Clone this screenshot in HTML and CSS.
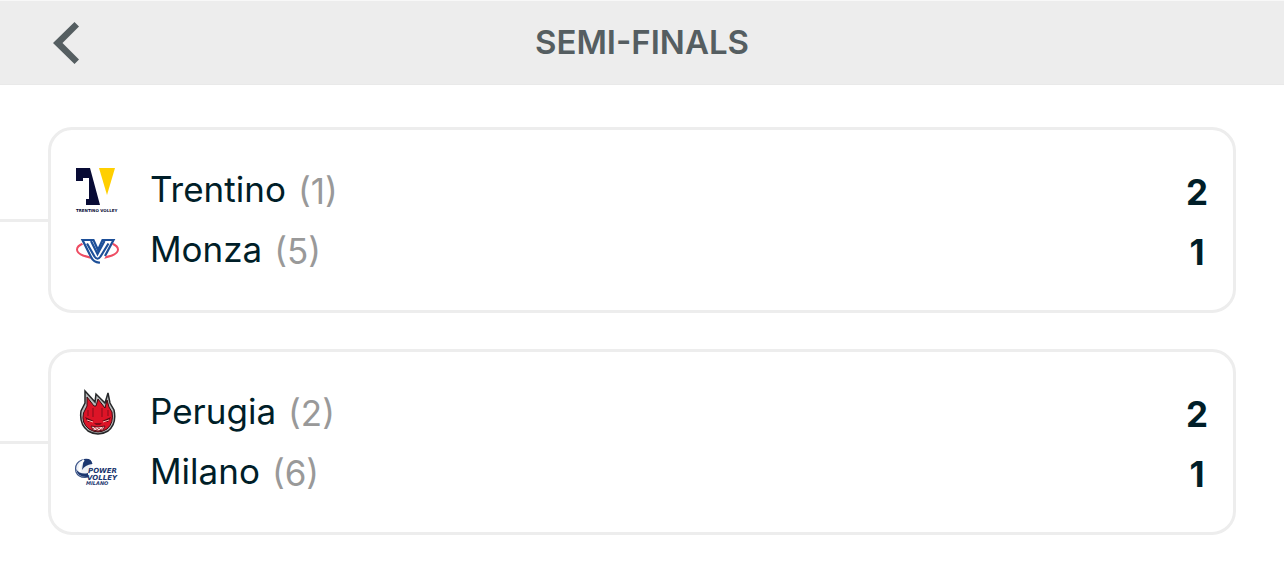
FILE: index.html
```
<!DOCTYPE html>
<html lang="en">
<head>
    <meta charset="utf-8">
    <meta name="viewport" content="width=device-width, initial-scale=1">
    <title>Semi-finals</title>
    <link rel="stylesheet" href="styles.css">
</head>
<body>
    <header class="topbar">
        <button class="back" type="button" aria-label="Back">
            <svg width="26" height="42" viewBox="0 0 26 42"><path d="M21.5 0 L26 4.5 L9.5 21 L26 37.5 L21.5 42 L0 21 Z" fill="#555e61"/></svg>
        </button>
        <h1 class="title">SEMI-FINALS</h1>
    </header>

    <main class="bracket">
        <section class="match">
            <div class="connector"></div>
            <div class="card">
                <div class="team">
                    <svg class="logo" viewBox="0 0 46 46">
                        <path d="M2 1 H16 L26 38 H12 V32 H15 V11 H9 V14 H2 Z" fill="#080b35"/>
                        <path d="M25 1 H41 L33 28 Z" fill="#ffcf00"/>
                        <text class="logo-text" x="2" y="45" font-size="4" fill="#080b35">TRENTINO VOLLEY</text>
                    </svg>
                    <span class="name">Trentino</span>
                    <span class="seed">(1)</span>
                    <span class="score">2</span>
                </div>
                <div class="team">
                    <svg class="logo" viewBox="0 0 46 46" fill="none">
                        <ellipse cx="23.5" cy="22.5" rx="20.5" ry="8.5" stroke="#ee4d63" stroke-width="2"/>
                        <path d="M5 11 H42 L29 34 Q24 38 18 33 Z" fill="#fff"/>
                        <g stroke="#1d4f98" stroke-width="2.2">
                            <path d="M26 35.5 Q20 36 17 30 L8.5 13 H19.5 L24 23 L28.5 13 H39.5 L31 29"/>
                            <path d="M13 16.5 L20.5 29.500 Q23.500 34 26.500 29.500 L34.500 16.500"/>
                            <path d="M17 14 L23.500 27 L30.500 14"/>
                        </g>
                    </svg>
                    <span class="name">Monza</span>
                    <span class="seed">(5)</span>
                    <span class="score">1</span>
                </div>
            </div>
        </section>

        <section class="match">
            <div class="connector"></div>
            <div class="card">
                <div class="team">
                    <svg class="logo" viewBox="0 0 46 46">
                        <path d="M11 2 L21 13 L22 5 L31 14 L34 4 L36 14 L40 21 Q43 35 34 42 Q24 48 14 42 Q5 35 7 22 L11 14 Z" fill="#b8babb" stroke="#252729" stroke-width="1.5"/>
                        <path d="M13 8 L20 17 L22 17 L24 10 L31 19 L33 11 L35 18 L38 23 Q40 34 33 40 Q24 46 15 40 Q7 34 9.5 24 L13 17 Z" fill="#dd1427" stroke="#3a0d12" stroke-width="1"/>
                        <path d="M19 19 V28 M28 19 V28 M14 21 V27 M34 21 V27" fill="none" stroke="#9a0f1e" stroke-width="1.3"/>
                        <path d="M11 28 L20 32 L14 33 Z M37 28 L28 32 L34 33 Z" fill="#5a0b14"/>
                        <path d="M13 31 L19 33 M35 31 L29 33" stroke="#ffb5af" stroke-width="1"/>
                        <path d="M20 34 H28 L26 36 H22 Z" fill="#800c1a"/>
                        <path d="M17 37 Q24 39 31 37 L29 41 Q24 43 19 41 Z" fill="#f5d8d4" stroke="#650e18" stroke-width="1"/>
                        <path d="M19 40 L21 38 L23 41 L25 39 L27 41 L29 38" fill="none" stroke="#b31225" stroke-width="0.7"/>
                    </svg>
                    <span class="name">Perugia</span>
                    <span class="seed">(2)</span>
                    <span class="score">2</span>
                </div>
                <div class="team">
                    <svg class="logo" viewBox="0 0 46 46">
                        <path d="M15 28 Q5 30 2 23 Q0 14 8 11 Q16 9 18 15" fill="#edf0f6" stroke="#3a5387" stroke-width="1.2"/>
                        <path d="M10 10 Q18 9 18 15 Q11 16 8 21 Q9 14 10 10 Z" fill="#1c3770"/>
                        <path d="M10 11 Q4 16 6 23" fill="none" stroke="#fff" stroke-width="2"/>
                        <path d="M2 20 Q6 26 14 24 L14 28 Q4 29 2 20 Z" fill="#1c3770"/>
                        <g class="logo-text logo-italic" fill="#1c3770">
                            <text x="14" y="24" font-size="7">POWER</text>
                            <text x="13" y="31" font-size="7">VOLLEY</text>
                            <text x="12" y="36" font-size="5">MILANO</text>
                        </g>
                    </svg>
                    <span class="name">Milano</span>
                    <span class="seed">(6)</span>
                    <span class="score">1</span>
                </div>
            </div>
        </section>
    </main>
</body>
</html>
```
FILE: styles.css
```
* {
    box-sizing: border-box;
}
body {
    margin: 0;
    background: #fff;
    color: #001e28;
    font-family: Inter, "Liberation Sans", sans-serif;
}
.topbar {
    display: grid;
    grid-template-columns: 79px 1fr 79px;
    align-items: center;
    padding: 20px 0;
    background: #ededed;
    border-top: 1px solid #f8f8f8;
    border-bottom: 1px solid #e9e9e9;
}
.back {
    display: flex;
    justify-content: flex-end;
    padding: 0;
    border: none;
    background: none;
    cursor: pointer;
}
.title {
    margin: 0;
    color: #555e61;
    font-size: 33px;
    font-weight: 600;
    line-height: 43px;
    text-align: center;
}
.bracket {
    display: flex;
    flex-direction: column;
    gap: 36px;
    padding: 42px 48px 36px 0;
}
.match {
    display: flex;
    align-items: center;
}
.connector {
    width: 48px;
    height: 3px;
    background: #ededed;
}
.card {
    flex: 1;
    padding: 30px 24px 30px 23px;
    border: 3px solid #ededed;
    border-radius: 24px;
}
.team {
    display: flex;
    align-items: center;
    height: 60px;
    font-size: 35px;
}
.logo {
    width: 46px;
    height: 46px;
    margin-right: 30px;
}
.logo-text {
    font-family: "DejaVu Sans", sans-serif;
    font-weight: 700;
}
.logo-italic {
    font-style: italic;
}
.name {
    padding-bottom: 2px;
}
.seed {
    margin-left: 12px;
    padding-top: 2px;
    color: #999;
}
.score {
    width: 24px;
    margin-left: auto;
    padding-top: 4px;
    font-weight: 700;
    text-align: center;
}
```
